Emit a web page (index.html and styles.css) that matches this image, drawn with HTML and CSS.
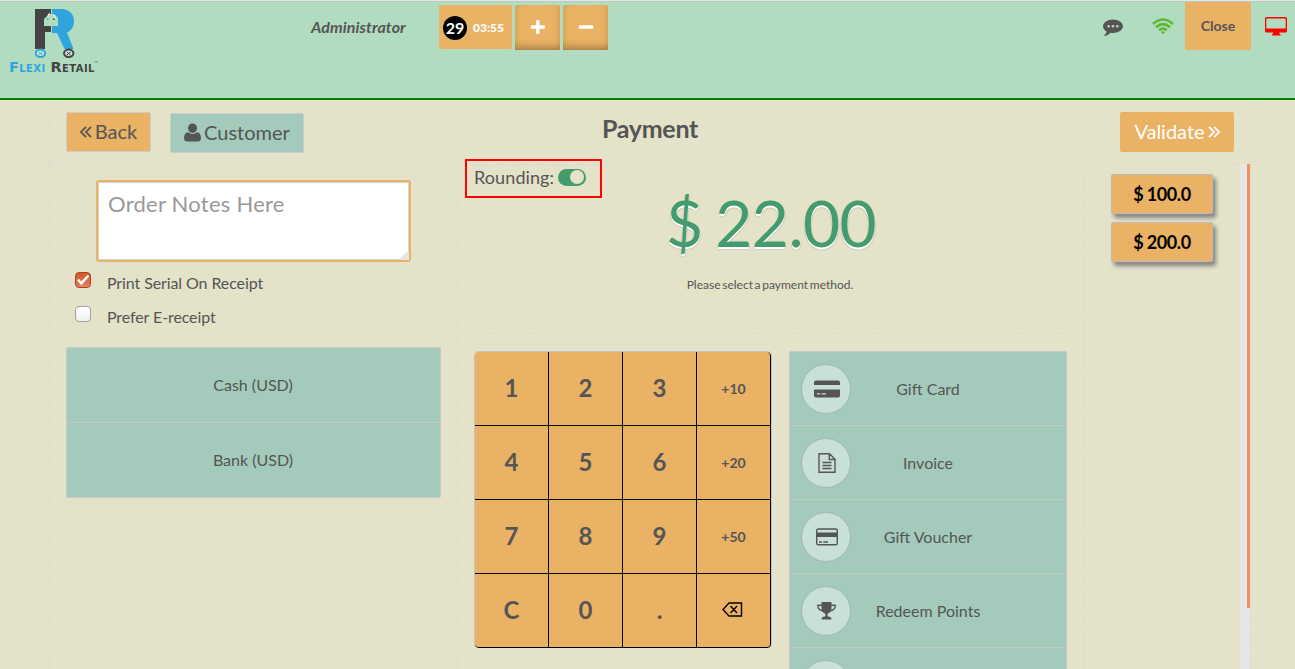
FILE: index.html
```html
<!DOCTYPE html>
<html lang="en">
<head>
<meta charset="utf-8">
<title>Payment</title>
<link rel="stylesheet" href="styles.css">
</head>
<body>
<header class="topbar">
  <div class="logo">
    <svg class="logo-mark" width="40" height="50" viewBox="0 0 40 50">
      <path fill="#444" d="M0 0H16V5H14L9 10V17H16V23H10V40H0Z"/>
      <path fill="#30a5dc" d="M17 0H27Q39 1 39 13Q39 20 32 23.500L38.500 40H29.500L22 24H17V17H23V9L19 5H17Z"/>
      <path fill="none" stroke="#e5f3e9" stroke-width="1" d="M13 8Q13 4 15 4M18 7Q21 5 20 9"/>
      <path fill="#30a5dc" d="M12 9.500h1.500v1.500h-1.500z"/><path fill="#444" d="M18 9.500h1.500v1.500h-1.500z"/>
      <ellipse cx="5.500" cy="44.300" rx="4.700" ry="3.700" fill="#cfe6d6" stroke="#30a5dc" stroke-width="2"/>
      <path stroke="#30a5dc" stroke-width="1" d="M3.500 43L7.500 46M3.500 46L7.500 43"/>
      <ellipse cx="33.700" cy="44.300" rx="4.700" ry="3.700" fill="#cfe6d6" stroke="#444" stroke-width="2"/>
      <path stroke="#444" stroke-width="1" d="M31.700 43L35.700 46M31.700 46L35.700 43"/>
    </svg>
    <div class="wordmark"><span class="blue">Flexi</span><span>Retail</span><i class="tm">™</i></div>
  </div>
  <div class="user">Administrator</div>
  <div class="head-actions">
    <div class="timer"><span class="day">29</span><span class="time">03:55</span></div>
    <button class="square" aria-label="Add order"><svg width="16" height="16" viewBox="0 0 16 16"><path fill="#fff" d="M6 1.200h3.600v5.100h5.200v3.400H9.600v5.100H6V9.700H.900V6.300H6z"/></svg></button>
    <button class="square" aria-label="Remove order"><svg width="16" height="16" viewBox="0 0 16 16"><rect x=".8" y="6.300" width="14.400" height="3.400" rx=".6" fill="#fff"/></svg></button>
  </div>
  <div class="head-status">
    <svg class="chat" width="20" height="18" viewBox="0 0 20 18"><path fill="#555" d="M10 .5C4.500.5 0 3.500 0 7.300c0 2.100 1.400 4 3.600 5.200-.3 1.500-1.200 2.700-2.200 3.700-.3.400 0 .800.500.700 2.300-.4 4.200-1.500 5.600-3.100.8.200 1.600.200 2.500.200 5.500 0 10-3 10-6.700S15.500.5 10 .5z"/><circle cx="5.700" cy="7.200" r="1.300" fill="#b2dcc0"/><circle cx="10" cy="7.200" r="1.300" fill="#b2dcc0"/><circle cx="14.300" cy="7.200" r="1.300" fill="#b2dcc0"/></svg>
    <svg class="wifi" width="22" height="17" viewBox="0 0 22 17"><g fill="none" stroke="#5cb82e" stroke-width="2.500"><path d="M1 6Q11-3 21 6"/><path d="M4 9.200Q11 3 18 9.200"/><path d="M7.200 12.200Q11 9 14.800 12.200"/></g><path fill="#5cb82e" d="M8.900 14Q11 12.400 13.100 14L11 16.300z"/></svg>
    <button class="close">Close</button>
    <svg class="screen-icon" width="22" height="19" viewBox="0 0 22 19"><path fill="red" fill-rule="evenodd" d="M1.500 0h19Q22 0 22 1.500v12.700q0 1.400-1.500 1.400h-6v1.500h1V18.500H7V17.100h1V15.600H1.500Q0 15.600 0 14.200V1.500Q0 0 1.500 0zM1.700 1.500q-.4 0-.4.400v9.500h19.400V1.900q0-.4-.4-.4z"/></svg>
  </div>
</header>

<main class="payment">
  <div class="titlebar">
    <button class="btn back"><svg width="12" height="12" viewBox="0 0 12 12"><path class="chev" d="M6 .8L1 6l5 5.200M11 .8L6 6l5 5.200"/></svg>Back</button>
    <button class="btn customer"><svg width="17" height="19" viewBox="0 0 17 19"><path fill="#555" d="M8.500.5C11 .5 13 2.400 13 5s-2 5-4.500 5S4 7.600 4 5 6 .5 8.500.5zM4.300 9.200C5.400 10.400 6.800 11 8.500 11s3.100-.6 4.200-1.800C15.600 9.400 17 11.800 17 15.200c0 2-1.300 3.300-3.200 3.300H3.200C1.300 18.500 0 17.200 0 15.200 0 11.800 1.400 9.400 4.300 9.200z"/></svg>Customer</button>
    <h1>Payment</h1>
    <button class="btn validate">Validate<svg width="12" height="12" viewBox="0 0 12 12"><path class="chev" d="M1 .8L6 6l-5 5.200M6 .8L11 6l-5 5.200"/></svg></button>
  </div>

  <div class="columns">
    <section class="left">
      <textarea class="notes" placeholder="Order Notes Here"></textarea>
      <label class="check"><span class="box on"><svg width="14" height="14" viewBox="0 0 14 14"><path fill="none" stroke="#fff" stroke-width="2.500" d="M2 6.500l3.300 3.800L12.500 2.500"/></svg></span>Print Serial On Receipt</label>
      <label class="check"><span class="box"></span>Prefer E-receipt</label>
      <div class="journals">
        <div class="journal">Cash (USD)</div>
        <div class="journal">Bank (USD)</div>
      </div>
    </section>

    <section class="center">
      <div class="summary">
        <div class="rounding">Rounding:<span class="toggle"><span class="knob"></span></span></div>
        <div class="total">$ 22.00</div>
        <div class="hint">Please select a payment method.</div>
      </div>
      <div class="lower">
        <div class="numpad">
          <button>1</button><button>2</button><button>3</button><button class="mode">+10</button>
          <button>4</button><button>5</button><button>6</button><button class="mode">+20</button>
          <button>7</button><button>8</button><button>9</button><button class="mode">+50</button>
          <button>C</button><button>0</button><button>.</button><button aria-label="Backspace"><svg class="bksp" width="21" height="15" viewBox="0 0 21 15"><path fill="none" stroke="#000" stroke-width="1.400" d="M7 1h12.500v13H7L1 7.500zM8.500 4l6.500 7M15 4l-6.500 7"/></svg></button>
        </div>
        <div class="options">
          <div class="option"><span class="disc"><svg width="26" height="18" viewBox="0 0 26 18"><path fill="#555" fill-rule="evenodd" d="M2 .5h22q2 0 2 2V5H0V2.500Q0 .5 2 .5zM0 9.500h26v6q0 2-2 2H2q-2 0-2-2zM3 13.300v1.200h3v-1.200zM7.500 13.300v1.200H12v-1.200z"/></svg></span><span class="label">Gift Card</span></div>
          <div class="option"><span class="disc"><svg width="18" height="20" viewBox="0 0 18 20"><g fill="none" stroke="#555" stroke-width="1.400"><path d="M1 .8h10.500l5.500 5.500v13H1zM11.300 1v5.500H17M4.500 9.500h9M4.500 12.500h9M4.500 15.500h9"/></g></svg></span><span class="label">Invoice</span></div>
          <div class="option"><span class="disc"><svg width="22" height="18" viewBox="0 0 22 18"><rect x=".7" y="1" width="20.600" height="15.800" rx="1.600" fill="none" stroke="#555" stroke-width="1.400"/><path fill="#555" d="M1 4.500h20v4.500H1zM3 13.300h3v1.400H3zM7.300 13.300H12v1.400H7.300z"/></svg></span><span class="label">Gift Voucher</span></div>
          <div class="option"><span class="disc"><svg width="19" height="18" viewBox="0 0 19 18"><path fill="#555" d="M4.500 0h10v6c0 2.800-1.300 4.600-3.500 5.600-.7 1-.5 2.400 0 2.900 2 .1 3.300.8 3.300 2V17.500H4.700v-1c0-1.200 1.300-1.900 3.300-2 .5-.5.7-1.900 0-2.900C5.800 10.600 4.500 8.800 4.500 6z"/><path fill="none" stroke="#555" stroke-width="1.400" d="M5 3.300H.8Q.5 8 6.500 9M14 3.300h4.200Q18.500 8 12.500 9"/></svg></span><span class="label">Redeem Points</span></div>
          <div class="option"><span class="disc"></span></div>
        </div>
      </div>
    </section>

    <section class="right">
      <button class="amount">$ 100.0</button>
      <button class="amount">$ 200.0</button>
    </section>
    <div class="scroll"><div class="thumb"></div></div>
  </div>
</main>
</body>
</html>
```
FILE: styles.css
```css
* { box-sizing: border-box; }
body {
  margin: 0;
  width: 1295px;
  height: 669px;
  overflow: hidden;
  background: #e4e2c9;
  color: #555;
  font-family: Lato, sans-serif;
  font-size: 16px;
}
button { font-family: inherit; color: inherit; padding: 0; border: 0; }
svg { display: block; }

.topbar {
  display: flex;
  align-items: flex-start;
  height: 100px;
  border-top: 1px solid #e6e6e6;
  border-bottom: 2px solid #008000;
  background: #b2dcc0;
  box-shadow: inset 0 1px 0 #bcc9bf;
}
.logo { width: 311px; flex: none; padding: 8px 0 0 9px; }
.logo-mark { margin-left: 26px; }
.wordmark {
  display: flex;
  gap: 5px;
  font: bold 14.500px/16px "DejaVu Sans", sans-serif;
  font-variant: small-caps;
  letter-spacing: .4px;
  color: #444;
  white-space: nowrap;
}
.blue { color: #30a5dc; }
.tm { margin-left: -6px; font: 5px/8px "DejaVu Sans", sans-serif; }
.user { width: 128px; padding-top: 16px; font-weight: bold; font-style: italic; line-height: 20px; letter-spacing: .08px; }
.head-actions { display: flex; gap: 3px; padding-top: 4px; }
.timer {
  display: flex;
  align-items: center;
  width: 73px;
  height: 44px;
  padding-left: 4px;
  border-radius: 2px;
  background: #e9b264;
  color: #fff;
  font-weight: 900;
}
.day {
  width: 24px;
  height: 24px;
  margin: 2px 6px 0 0;
  border-radius: 50%;
  background: #000;
  font-size: 16px;
  font-weight: bold;
  line-height: 24px;
  text-align: center;
}
.time { font-size: 12px; }
.square {
  display: flex;
  align-items: center;
  justify-content: center;
  width: 45px;
  height: 45px;
  padding-bottom: 1px;
  border-radius: 3px 3px 0 0;
  background: #e9b264;
  box-shadow: inset 0 -5px 9px -3px rgba(90, 60, 20, .55);
}
.head-status { display: flex; margin-left: auto; padding-right: 8px; }
.chat { margin: 18px 29px 0 0; }
.wifi { margin: 17px 11px 0 0; }
.close {
  width: 66px;
  height: 48px;
  margin: 1px 14px 0 0;
  padding-bottom: 1px;
  background: #e9b264;
  font-size: 14px;
  font-weight: bold;
}
.screen-icon { margin-top: 16px; }

.payment {
  width: 1202px;
  height: 569px;
  margin-left: 49px;
  border: dashed #d9d9d9;
  border-width: 0 1px;
}
.titlebar {
  display: flex;
  align-items: flex-start;
  height: 65px;
  padding: 12px 16px 0;
  border-bottom: 1px dashed #d9d9d9;
}
.btn {
  display: flex;
  align-items: center;
  justify-content: center;
  gap: 3px;
  height: 40px;
  padding-bottom: 2px;
  border: 1px solid #ccc;
  border-radius: 2px;
  background: #e9b264;
  font-size: 20px;
}
.btn svg { margin-top: 2px; }
.chev { fill: none; stroke: currentColor; stroke-width: 1.800; }
.back { width: 85px; }
.customer { width: 134px; margin: 1px 0 0 19px; background: #a4cabb; }
.customer svg { margin-top: 0; }
h1 { margin: 0 0 0 298px; font-size: 25px; line-height: 32px; letter-spacing: -.3px; }
.validate { width: 114px; margin-left: auto; border: 0; color: #fff; }

.columns { display: flex; height: 504px; }
.left { width: 408px; padding: 15px 16px 0; border-right: 1px dashed #d9d9d9; }
.notes {
  display: block;
  width: 315px;
  height: 82px;
  margin: 0 0 10px 30px;
  padding: 8px 10px;
  border: 2px solid #e9b264;
  border-radius: 3px;
  outline: 0;
  box-shadow: inset 0 0 0 1px #d4d4d4;
  background: #fff;
  font: 22px/28px Lato, sans-serif;
  letter-spacing: .25px;
}
.notes::placeholder { color: #999; }
.notes::-webkit-resizer {
  background: linear-gradient(135deg, transparent 66%, #e6e6e6 66%);
}
.check { display: flex; height: 34px; padding-left: 9px; line-height: 22px; letter-spacing: -.1px; }
.box {
  width: 16px;
  height: 16px;
  margin-right: 16px;
  border: 1px solid #a0a0a0;
  border-radius: 4px;
  background: linear-gradient(#fff, #f1f1f1);
}
.box.on { border-color: #a5452a; background: linear-gradient(#d75124, #e18461); }
.journals { margin-top: 7px; border: 1px solid #c8c8c8; border-radius: 2px; background: #a4cabb; }
.journal { height: 74px; padding-right: 1px; line-height: 73px; text-align: center; }
.journal + .journal { height: 75px; border-top: 1px solid #c8c8c8; }

.center { width: 627px; border-right: 1px dashed #d9d9d9; }
.summary { position: relative; height: 169px; padding-top: 19px; border-bottom: 1px dashed #d9d9d9; text-align: center; }
.rounding {
  position: absolute;
  left: 7px;
  top: -6px;
  display: flex;
  align-items: center;
  gap: 4px;
  width: 137px;
  height: 39px;
  padding: 0 0 3px 7px;
  border: 2px solid #f00;
  font-size: 18px;
  letter-spacing: .1px;
}
.toggle { width: 28px; height: 17px; padding: 2px; border-radius: 9px; background: #449b6e; }
.knob { display: block; width: 14px; height: 14px; margin: -.5px 0 0 10px; border-radius: 50%; background: #e4e2c9; }
.total {
  color: #449b6e;
  font-size: 64px;
  line-height: 77px;
  letter-spacing: -.6px;
  word-spacing: -3px;
  text-shadow: 0 2px 0 #fff, 0 2px 2px rgba(0, 0, 0, .3);
}
.hint { margin-top: 16px; padding-right: 2px; font-size: 12px; line-height: 16px; word-spacing: -1.400px; }
.lower { display: flex; gap: 17px; height: 335px; padding: 17px 0 0 16px; overflow: hidden; }
.numpad {
  display: grid;
  grid-template-columns: repeat(4, 74px);
  grid-auto-rows: 74px;
  flex: none;
  width: 298px;
  height: 298px;
  border: 1px solid #c4c4c4;
  border-bottom-color: transparent;
  border-radius: 5px;
  overflow: hidden;
}
.numpad button {
  display: flex;
  align-items: center;
  justify-content: center;
  padding: 0 0 2px;
  border: solid #000;
  border-width: 0 1px 1px 0;
  background: #e9b264;
  font-size: 24px;
  font-weight: bold;
}
.numpad .mode { padding: 0 0 1px; font-size: 14px; }
.numpad button:nth-child(4) { border-top-right-radius: 4px; }
.numpad button:nth-child(16) { border-bottom-right-radius: 4px; }
.numpad button:nth-child(13) { border-bottom-left-radius: 4px; }
.bksp { margin-right: 2px; }
.options { width: 278px; height: 372px; flex: none; border: 1px solid #c8c8c8; border-radius: 2px; background: #a4cabb; }
.option {
  display: grid;
  grid-template-columns: 50px 1fr 50px;
  align-items: center;
  height: 74px;
  padding: 0 11px;
  border-bottom: 1px solid #c1cac3;
}
.disc {
  display: flex;
  align-items: center;
  justify-content: center;
  width: 50px;
  height: 50px;
  border: 1px solid #9fb7ac;
  border-radius: 50%;
  background: #c9e0d6;
}
.disc svg { margin-left: 1px; }
.label { text-align: center; }

.right { width: 155px; padding: 9px 0 0 26px; }
.amount {
  display: block;
  width: 102px;
  height: 40px;
  margin-bottom: 8px;
  border: 1px solid #bbb;
  border-radius: 2px;
  background: #e9b264;
  box-shadow: 3px 4px 4px #858585;
  color: #000;
  font-size: 18px;
  font-weight: bold;
  letter-spacing: -.4px;
  word-spacing: -.500px;
}
.scroll { width: 10px; height: 505px; margin-top: -1px; background: #e6e6e6; }
.thumb { width: 3px; height: 444px; margin-left: 7px; background: #f28d66; }
```
